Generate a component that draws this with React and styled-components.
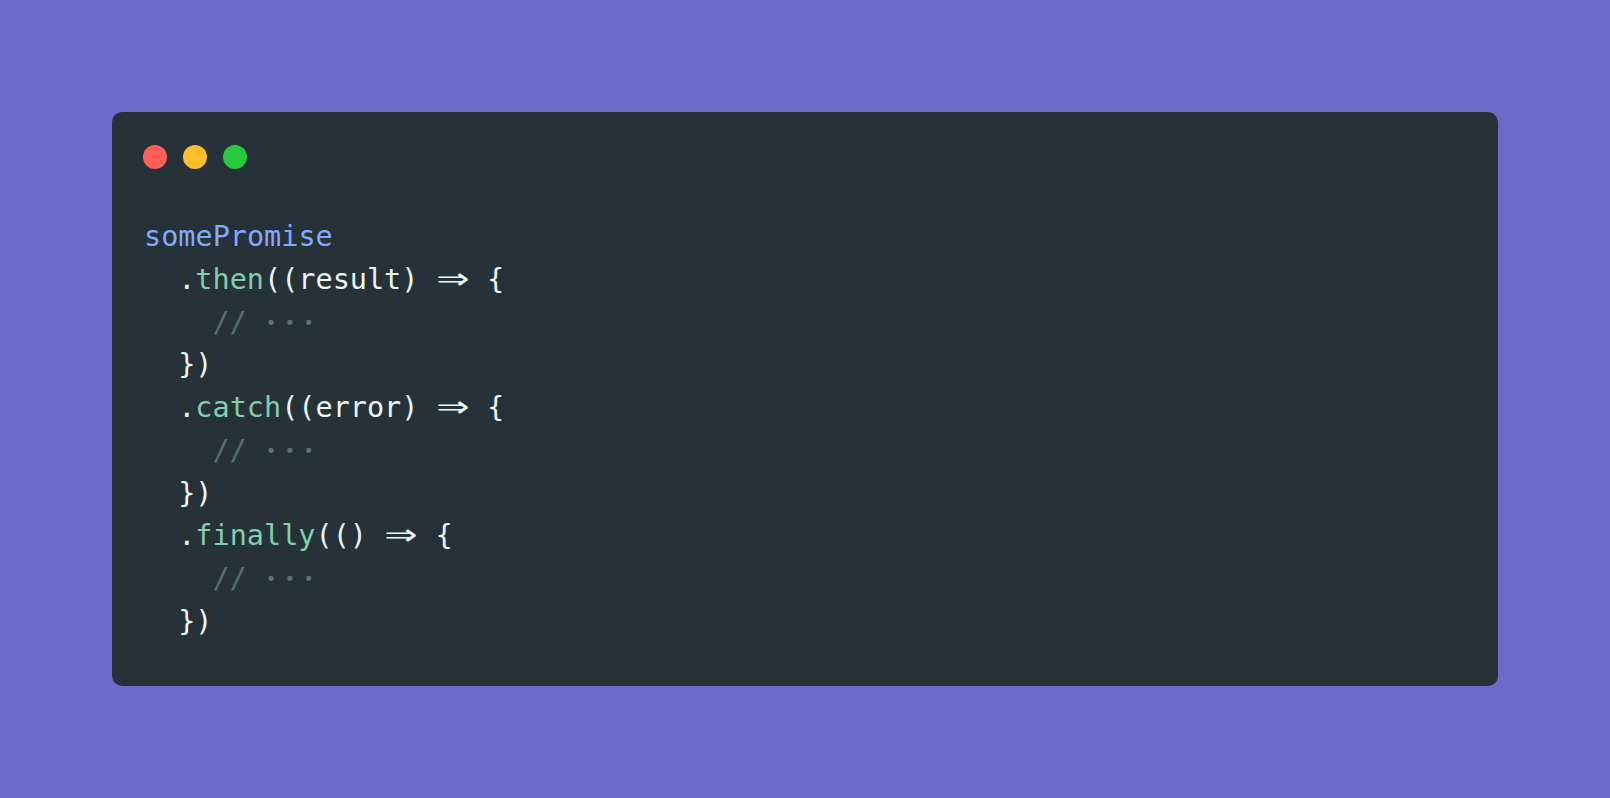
import React from "react";
import styled, { createGlobalStyle } from "styled-components";

const Global = createGlobalStyle`
  html, body { margin: 0; padding: 0; background: #6c6bc9; }
  body { width: 1610px; height: 798px; overflow: hidden; }
`;

const Page = styled.div`
  box-sizing: border-box;
  width: 1610px;
  height: 798px;
  padding: 112px 112px;
  background: #6c6bc9;
`;

const Card = styled.div`
  box-sizing: border-box;
  height: 574px;
  background: #263238;
  border-radius: 10px;
  padding: 33px 31px 0 31px;
`;

const Dots = styled.div`
  display: flex;
  gap: 16px;
`;

const Dot = styled.span`
  width: 24px;
  height: 24px;
  border-radius: 50%;
  background: ${(p) => p.$c};
`;

const Code = styled.pre`
  margin: 47px 0 0 1px;
  font-family: "DejaVu Sans Mono", "Liberation Mono", monospace;
  font-size: 28.5px;
  line-height: 42.75px;
  color: #e9f5f3;
`;

const Line = styled.div`
  padding-left: ${(p) => p.$indent * 0.6}em;
  white-space: pre;
`;

const Obj = styled.span`color: #82aaff;`;
const Fn = styled.span`color: #80cfae;`;
const Comment = styled.span`color: #546e7a;`;
const Arrow = styled.span`
  display: inline-block;
  width: 1.2em;
  text-align: center;
  transform: scale(1.9, 1.35);
  transform-origin: 50% 62%;
`;
const Ellipsis = styled.span`
  display: inline-block;
  margin-left: 2px;
  font-size: 0.6em;
  line-height: 1;
  letter-spacing: 0.5em;
  vertical-align: 3px;
  color: #5b7480;
`;

const chain = [
  { name: "then", arg: "(result)" },
  { name: "catch", arg: "(error)" },
  { name: "finally", arg: "()" },
];

export default function App() {
  return (
    <>
      <Global />
      <Page>
        <Card>
          <Dots>
            <Dot $c="#ff5f56" />
            <Dot $c="#ffbd2e" />
            <Dot $c="#27c93f" />
          </Dots>
          <Code>
            <Line $indent={0}><Obj>somePromise</Obj></Line>
            {chain.map((c) => (
              <React.Fragment key={c.name}>
                <Line $indent={2}>
                  .<Fn>{c.name}</Fn>({c.arg} <Arrow>⇒</Arrow> {"{"}
                </Line>
                <Line $indent={4}>
                  <Comment>// <Ellipsis>•••</Ellipsis></Comment>
                </Line>
                <Line $indent={2}>{"})"}</Line>
              </React.Fragment>
            ))}
          </Code>
        </Card>
      </Page>
    </>
  );
}
